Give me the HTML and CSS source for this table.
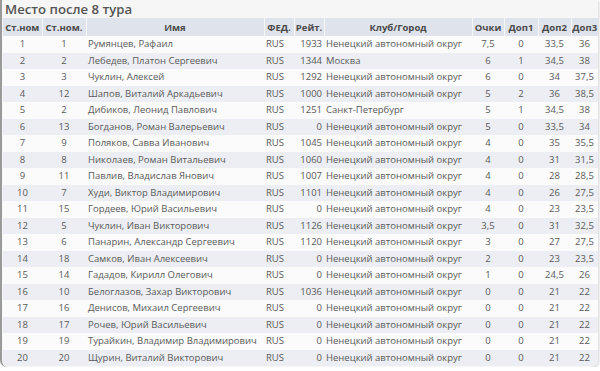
FILE: index.html
```html
<!DOCTYPE html>
<html lang="ru">
<head>
<meta charset="utf-8">
<link rel="stylesheet" href="styles.css">
</head>
<body>
<div class="card">
  <h1 class="title">Место после 8 тура</h1>
  <table class="tbl">
    <colgroup>
      <col class="c-sn"><col class="c-sn2"><col class="c-name"><col class="c-fed"><col class="c-rat"><col class="c-club"><col class="c-pts"><col class="c-d1"><col class="c-d2"><col class="c-d3">
    </colgroup>
    <thead>
      <tr><th>Ст.ном</th><th>Ст.ном.</th><th>Имя</th><th>ФЕД.</th><th>Рейт.</th><th>Клуб/Город</th><th>Очки</th><th>Доп1</th><th>Доп2</th><th>Доп3</th></tr>
    </thead>
    <tbody>
      <tr><td class="ctr">1</td><td class="ctr">1</td><td>Румянцев, Рафаил</td><td>RUS</td><td class="num">1933</td><td>Ненецкий автономный округ</td><td class="ctr">7,5</td><td class="ctr">0</td><td class="ctr">33,5</td><td class="ctr">36</td></tr>
      <tr><td class="ctr">2</td><td class="ctr">2</td><td>Лебедев, Платон Сергеевич</td><td>RUS</td><td class="num">1344</td><td>Москва</td><td class="ctr">6</td><td class="ctr">1</td><td class="ctr">34,5</td><td class="ctr">38</td></tr>
      <tr><td class="ctr">3</td><td class="ctr">3</td><td>Чуклин, Алексей</td><td>RUS</td><td class="num">1292</td><td>Ненецкий автономный округ</td><td class="ctr">6</td><td class="ctr">0</td><td class="ctr">34</td><td class="ctr">37,5</td></tr>
      <tr><td class="ctr">4</td><td class="ctr">12</td><td>Шапов, Виталий Аркадьевич</td><td>RUS</td><td class="num">1000</td><td>Ненецкий автономный округ</td><td class="ctr">5</td><td class="ctr">2</td><td class="ctr">36</td><td class="ctr">38,5</td></tr>
      <tr><td class="ctr">5</td><td class="ctr">2</td><td>Дибиков, Леонид Павлович</td><td>RUS</td><td class="num">1251</td><td>Санкт-Петербург</td><td class="ctr">5</td><td class="ctr">1</td><td class="ctr">34,5</td><td class="ctr">38</td></tr>
      <tr><td class="ctr">6</td><td class="ctr">13</td><td>Богданов, Роман Валерьевич</td><td>RUS</td><td class="num">0</td><td>Ненецкий автономный округ</td><td class="ctr">5</td><td class="ctr">0</td><td class="ctr">33,5</td><td class="ctr">34</td></tr>
      <tr><td class="ctr">7</td><td class="ctr">9</td><td>Поляков, Савва Иванович</td><td>RUS</td><td class="num">1045</td><td>Ненецкий автономный округ</td><td class="ctr">4</td><td class="ctr">0</td><td class="ctr">35</td><td class="ctr">35,5</td></tr>
      <tr><td class="ctr">8</td><td class="ctr">8</td><td>Николаев, Роман Витальевич</td><td>RUS</td><td class="num">1060</td><td>Ненецкий автономный округ</td><td class="ctr">4</td><td class="ctr">0</td><td class="ctr">31</td><td class="ctr">31,5</td></tr>
      <tr><td class="ctr">9</td><td class="ctr">11</td><td>Павлив, Владислав Янович</td><td>RUS</td><td class="num">1007</td><td>Ненецкий автономный округ</td><td class="ctr">4</td><td class="ctr">0</td><td class="ctr">28</td><td class="ctr">28,5</td></tr>
      <tr><td class="ctr">10</td><td class="ctr">7</td><td>Худи, Виктор Владимирович</td><td>RUS</td><td class="num">1101</td><td>Ненецкий автономный округ</td><td class="ctr">4</td><td class="ctr">0</td><td class="ctr">26</td><td class="ctr">27,5</td></tr>
      <tr><td class="ctr">11</td><td class="ctr">15</td><td>Гордеев, Юрий Васильевич</td><td>RUS</td><td class="num">0</td><td>Ненецкий автономный округ</td><td class="ctr">4</td><td class="ctr">0</td><td class="ctr">23</td><td class="ctr">23,5</td></tr>
      <tr><td class="ctr">12</td><td class="ctr">5</td><td>Чуклин, Иван Викторович</td><td>RUS</td><td class="num">1126</td><td>Ненецкий автономный округ</td><td class="ctr">3,5</td><td class="ctr">0</td><td class="ctr">31</td><td class="ctr">32,5</td></tr>
      <tr><td class="ctr">13</td><td class="ctr">6</td><td>Панарин, Александр Сергеевич</td><td>RUS</td><td class="num">1120</td><td>Ненецкий автономный округ</td><td class="ctr">3</td><td class="ctr">0</td><td class="ctr">27</td><td class="ctr">27,5</td></tr>
      <tr><td class="ctr">14</td><td class="ctr">18</td><td>Самков, Иван Алексеевич</td><td>RUS</td><td class="num">0</td><td>Ненецкий автономный округ</td><td class="ctr">2</td><td class="ctr">0</td><td class="ctr">23</td><td class="ctr">23,5</td></tr>
      <tr><td class="ctr">15</td><td class="ctr">14</td><td>Гададов, Кирилл Олегович</td><td>RUS</td><td class="num">0</td><td>Ненецкий автономный округ</td><td class="ctr">1</td><td class="ctr">0</td><td class="ctr">24,5</td><td class="ctr">26</td></tr>
      <tr><td class="ctr">16</td><td class="ctr">10</td><td>Белоглазов, Захар Викторович</td><td>RUS</td><td class="num">1036</td><td>Ненецкий автономный округ</td><td class="ctr">0</td><td class="ctr">0</td><td class="ctr">21</td><td class="ctr">22</td></tr>
      <tr><td class="ctr">17</td><td class="ctr">16</td><td>Денисов, Михаил Сергеевич</td><td>RUS</td><td class="num">0</td><td>Ненецкий автономный округ</td><td class="ctr">0</td><td class="ctr">0</td><td class="ctr">21</td><td class="ctr">22</td></tr>
      <tr><td class="ctr">18</td><td class="ctr">17</td><td>Рочев, Юрий Васильевич</td><td>RUS</td><td class="num">0</td><td>Ненецкий автономный округ</td><td class="ctr">0</td><td class="ctr">0</td><td class="ctr">21</td><td class="ctr">22</td></tr>
      <tr><td class="ctr">19</td><td class="ctr">19</td><td>Турайкин, Владимир Владимирович</td><td>RUS</td><td class="num">0</td><td>Ненецкий автономный округ</td><td class="ctr">0</td><td class="ctr">0</td><td class="ctr">21</td><td class="ctr">22</td></tr>
      <tr><td class="ctr">20</td><td class="ctr">20</td><td>Щурин, Виталий Викторович</td><td>RUS</td><td class="num">0</td><td>Ненецкий автономный округ</td><td class="ctr">0</td><td class="ctr">0</td><td class="ctr">21</td><td class="ctr">22</td></tr>
    </tbody>
  </table>
</div>
</body>
</html>
```

FILE: styles.css
```css
html, body {
  margin: 0;
  padding: 0;
  background: #ffffff;
}
body {
  font-family: "Open Sans", "Noto Sans", "DejaVu Sans", sans-serif;
  color: #555;
}
.card {
  box-sizing: border-box;
  width: 598px;
  height: 367px;
  background: #f6f6f6;
  border-left: 2px solid #9a9a9a;
  border-bottom-left-radius: 7px;
  border-bottom-right-radius: 7px;
  box-shadow: 1px 1px 3px rgba(0,0,0,0.18);
  padding: 0 0 0 1px;
  overflow: hidden;
}
.title {
  margin: 0;
  padding: 1px 0 0 2px;
  height: 17px;
  font-size: 13.2px;
  line-height: 17px;
  font-weight: 600;
  color: #555;
}
.tbl {
  width: 595px;
  border-collapse: collapse;
  table-layout: fixed;
  font-size: 9.5px;
}
.c-sn { width: 39px; }
.c-sn2 { width: 44px; }
.c-name { width: 178px; }
.c-fed { width: 30px; }
.c-rat { width: 30px; }
.c-club { width: 148px; }
.c-pts { width: 32px; }
.c-d1 { width: 34px; }
.c-d2 { width: 33px; }
.c-d3 { width: 27px; }
.tbl th {
  background: #dfe3eb;
  color: #4a4a4a;
  font-weight: 700;
  height: 18px;
  padding: 0;
  border-left: 1px solid #f6f6f6;
  text-align: center;
  white-space: nowrap;
  overflow: hidden;
}
.tbl th:first-child { border-left: none; }
.tbl td {
  height: 16.5px;
  padding: 0 2px;
  white-space: nowrap;
  overflow: hidden;
  line-height: 16.5px;
  color: #5a5a5a;
}
.tbl tbody tr:nth-child(odd) td { background: #fbfbfb; }
.tbl tbody tr:nth-child(even) td { background: #eceef3; }
.tbl td.ctr { text-align: center; }
.tbl td.num { text-align: right; }
```
